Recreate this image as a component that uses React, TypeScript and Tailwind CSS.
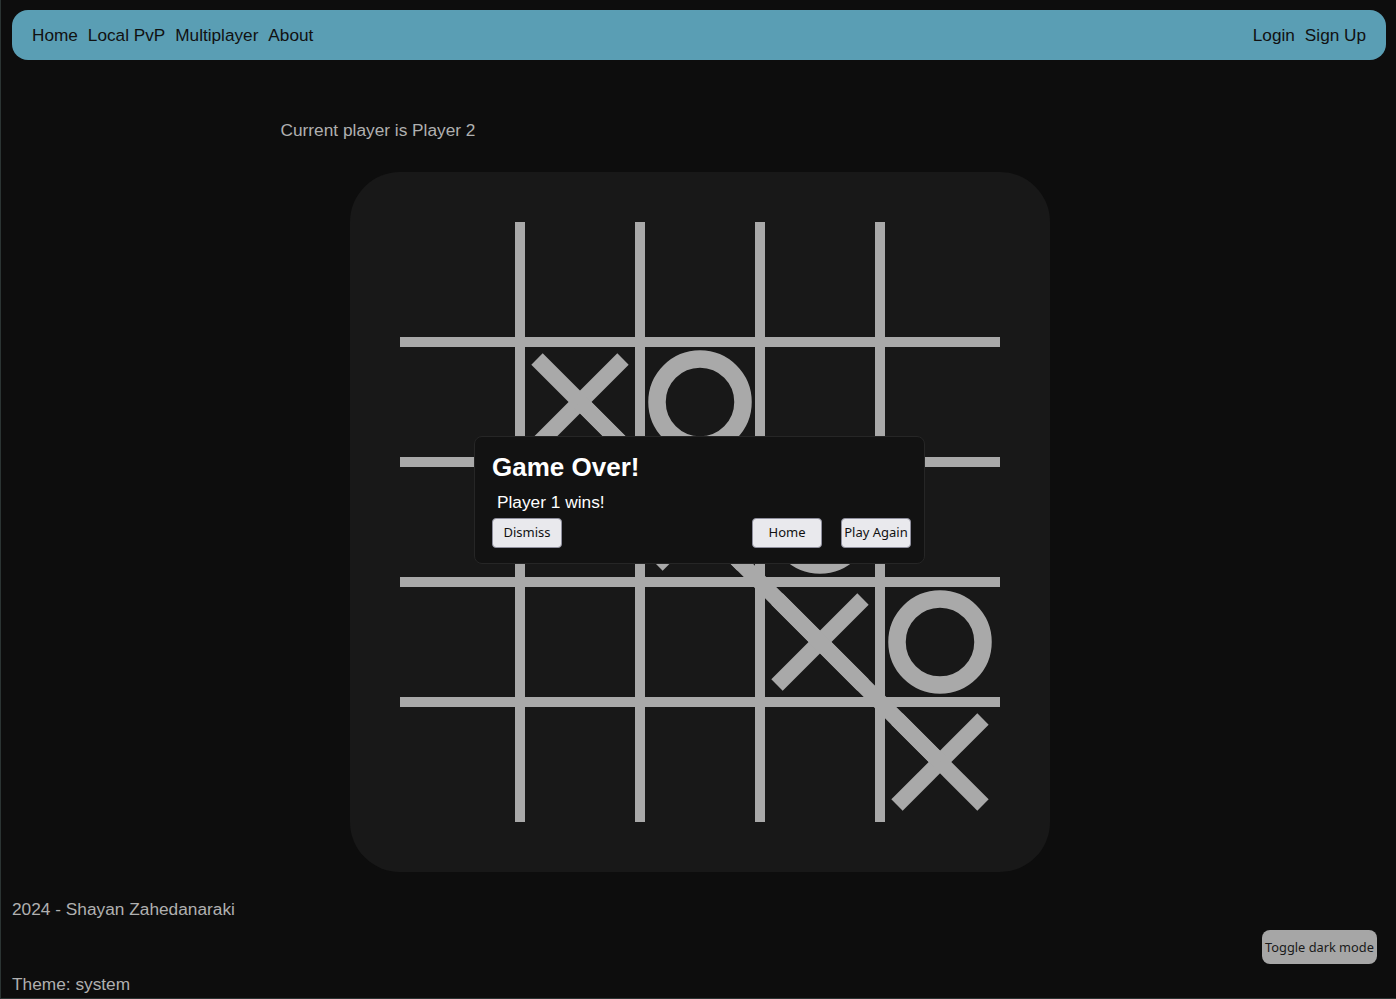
import React from 'react';

type Cell = 'X' | 'O' | null;

// 5x5 board, rows top to bottom
const board: Cell[][] = [
  [null, null, null, null, null],
  [null, 'X', 'O', null, null],
  [null, null, 'X', 'O', null],
  [null, null, null, 'X', 'O'],
  [null, null, null, null, 'X'],
];

const CELL = 120;
const INK = '#a9a9a9';

function Board() {
  const lines = [1, 2, 3, 4];
  return (
    <svg width={600} height={600} viewBox="0 0 600 600" className="block">
      {lines.map(i => (
        <rect key={`v${i}`} x={i * CELL - 5} y={0} width={10} height={600} fill={INK} />
      ))}
      {lines.map(i => (
        <rect key={`h${i}`} x={0} y={i * CELL - 5} width={600} height={10} fill={INK} />
      ))}
      {board.map((row, r) =>
        row.map((cell, c) => {
          if (!cell) return null;
          const cx = c * CELL + 60;
          const cy = r * CELL + 60;
          if (cell === 'X') {
            return (
              <g key={`${r}-${c}`} stroke={INK} strokeWidth={16}>
                <line x1={cx - 43} y1={cy - 43} x2={cx + 43} y2={cy + 43} />
                <line x1={cx + 43} y1={cy - 43} x2={cx - 43} y2={cy + 43} />
              </g>
            );
          }
          return <circle key={`${r}-${c}`} cx={cx} cy={cy} r={43} fill="none" stroke={INK} strokeWidth={17.5} />;
        })
      )}
      {/* winning line */}
      <line x1={180} y1={180} x2={540} y2={540} stroke={INK} strokeWidth={16} />
    </svg>
  );
}

function GameOverModal() {
  const btn =
    "w-[70px] h-[30px] px-0 bg-[#e9e9ed] border border-[#8f8f9d] rounded-[4px] text-[13px] text-[#111] font-['Noto_Sans',sans-serif] flex items-center justify-center";
  return (
    <div className="fixed inset-0 pl-[3px] flex items-center justify-center pointer-events-none">
      <div className="w-[451px] bg-[#121212] border border-[#262626] rounded-lg pt-[15px] pb-[15px] pl-[17px] pr-[13px] pointer-events-auto">
        <h2 className="text-[26px] leading-[30px] font-bold text-white">Game Over!</h2>
        <p className="mt-[10px] pl-[5px] text-[17.3px] leading-5 text-white">Player 1 wins!</p>
        <div className="mt-1.5 flex items-center">
          <button className={btn}>Dismiss</button>
          <div className="flex-1" />
          <button className={btn}>Home</button>
          <button className={`${btn} ml-[19px]`}>Play Again</button>
        </div>
      </div>
    </div>
  );
}

export default function App() {
  return (
    <div className="min-h-screen bg-[#0d0d0d] border-l border-b border-[#2b3433] font-['Liberation_Sans',Arial,sans-serif] flex flex-col">
      <nav className="mt-[10px] ml-[11px] mr-[10px] h-[50px] bg-[#5a9eb4] rounded-2xl px-5 pt-[1px] flex items-center justify-between text-[17.2px] text-[#111]">
        <div className="flex items-center gap-[10px]">
          <a>Home</a>
          <a>Local PvP</a>
          <a>Multiplayer</a>
          <a>About</a>
        </div>
        <div className="flex items-center gap-[10px]">
          <a>Login</a>
          <a>Sign Up</a>
        </div>
      </nav>

      <main className="w-[836px] mx-auto pt-[60px]">
        <p className="text-[17.3px] leading-5 text-[#b0b0b0]">Current player is Player 2</p>
        <div className="mt-[32px] ml-[69px] w-[700px] h-[700px] bg-[#181818] rounded-[50px] p-[50px]">
          <Board />
        </div>
      </main>

      <footer className="px-[11px] pb-[4px] text-[17.3px] leading-5 text-[#b0b0b0]">
        <p className="mt-[27px]">2024 - Shayan Zahedanaraki</p>
        <div className="mt-[11px] flex justify-end pr-[8px]">
          <button className="w-[115px] h-[34px] bg-[#a6a6a6] rounded-lg text-[12.8px] text-[#1a1a1a] font-['Noto_Sans',sans-serif]">
            Toggle dark mode
          </button>
        </div>
        <p className="mt-[10px]">Theme: system</p>
      </footer>

      <GameOverModal />
    </div>
  );
}
